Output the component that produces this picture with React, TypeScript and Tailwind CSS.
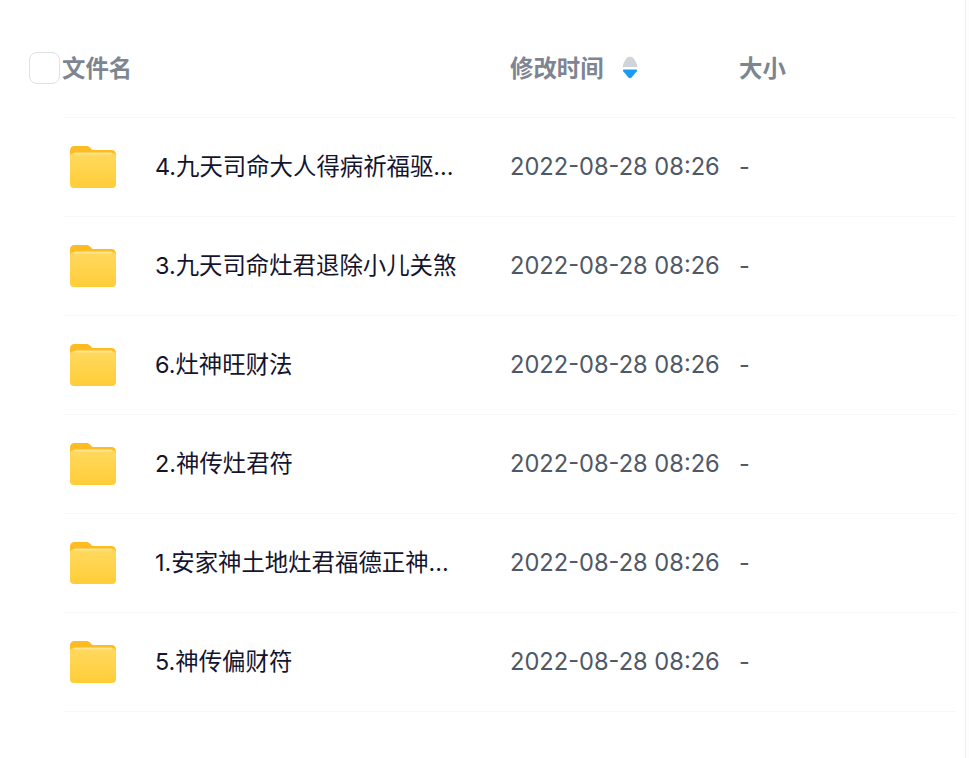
const files = [
  { name: "4.九天司命大人得病祈福驱...", time: "2022-08-28 08:26" },
  { name: "3.九天司命灶君退除小儿关煞", time: "2022-08-28 08:26" },
  { name: "6.灶神旺财法", time: "2022-08-28 08:26" },
  { name: "2.神传灶君符", time: "2022-08-28 08:26" },
  { name: "1.安家神土地灶君福德正神...", time: "2022-08-28 08:26" },
  { name: "5.神传偏财符", time: "2022-08-28 08:26" },
];

const FolderIcon = () => (
  <svg width="48" height="44" viewBox="0 0 48 44" fill="none" className="shrink-0">
    <defs>
      <linearGradient id="folderBody" x1="0" y1="0" x2="0" y2="1">
        <stop offset="0" stopColor="#ffd95f" />
        <stop offset="1" stopColor="#ffcd38" />
      </linearGradient>
    </defs>
    <path
      d="M1 5.5C1 2.8 2.8 1 5.5 1H17c2 0 3 .6 4.2 1.8L23.5 5H42.5C45.2 5 47 6.8 47 9.5V16H1Z"
      fill="#ffbb22"
    />
    <rect x="1" y="8" width="46" height="35" rx="4" fill="url(#folderBody)" />
    <rect x="5" y="7.5" width="38" height="2" rx="1" fill="#ffe590" />
  </svg>
);

const SortIcon = () => (
  <svg width="16" height="24" viewBox="0 0 16 24" className="shrink-0">
    <path d="M1.6 11C.8 11 .5 10.2.8 9.4C1.6 7.2 2.6 5 3.9 3 5 1.4 6.4.8 8 .8s3 .6 4.1 2.2c1.3 2 2.3 4.2 3.1 6.4.3.8 0 1.6-.8 1.6Z" fill="#d0d3d9" />
    <path d="M2 13.5h12c1 0 1.4 1 .8 1.8L9.6 21.6c-.9 1-2.3 1-3.2 0L1.2 15.3c-.6-.8-.2-1.8.8-1.8Z" fill="#1a9cf5" />
  </svg>
);

export default function App() {
  return (
    <div className="flex h-[758px] w-[969px] overflow-hidden bg-white font-['Inter','Noto_Sans_CJK_SC',sans-serif]">
      <div className="w-[965px] pt-[19px]">
        {/* Table header */}
        <div className="flex h-[98px] items-center pl-[29px] pt-[1px] text-[23.4px] font-bold text-[#7e8592]">
          <div className="mr-[2px] -mt-[1px] h-[32px] w-[31px] shrink-0 rounded-[8px] border border-[#dfe1e5] bg-white" />
          <div className="w-[448px]">文件名</div>
          <div className="flex w-[229px] items-center gap-[18px]">
            <span>修改时间</span>
            <SortIcon />
          </div>
          <div>大小</div>
        </div>

        {/* File rows */}
        <div className="ml-[64px] mr-[9px] border-t border-[#f7f7f8]">
          {files.map((file) => (
            <div key={file.name} className="flex h-[99px] items-center border-b border-[#f7f7f8] pb-[1px]">
              <div className="ml-[5px] mt-[1px] w-[86px] shrink-0">
                <FolderIcon />
              </div>
              <div className="w-[355px] text-[23.4px] whitespace-nowrap text-[#14142e]">{file.name}</div>
              <div className="w-[229px] text-[23.65px] whitespace-nowrap text-[#4f5866]">{file.time}</div>
              <div className="text-[23.4px] text-[#4f5866]">-</div>
            </div>
          ))}
        </div>
      </div>
      <div className="w-[1px] bg-[#eeeff1]" />
      <div className="flex-1 bg-[#fdfdfd]" />
    </div>
  );
}
